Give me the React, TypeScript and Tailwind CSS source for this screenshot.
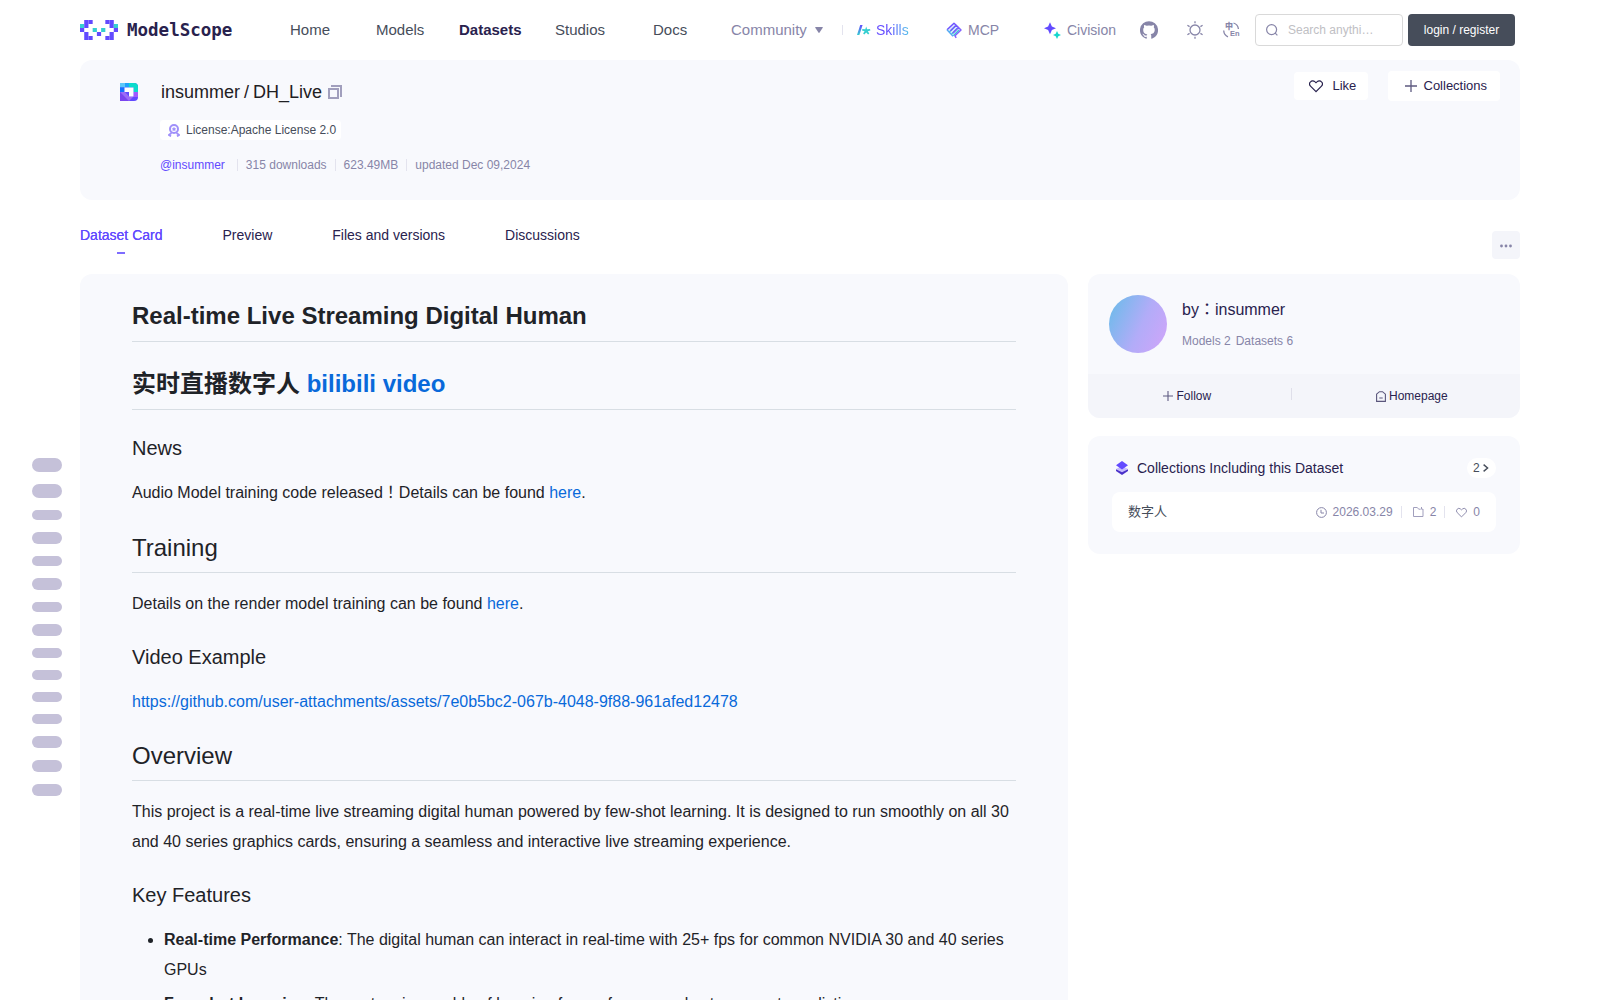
import clsx from "clsx";

const outline = [14, 14, 10, 12, 10, 12, 10, 12, 10, 10, 10, 10, 12, 12, 12];

const navItems = [
  { label: "Home", width: "w-[86px]" },
  { label: "Models", width: "w-[83px]" },
  { label: "Datasets", width: "w-24", active: true },
  { label: "Studios", width: "w-[98px]" },
  { label: "Docs", width: "w-[78px]" },
];

// [column, row, color]
const logoPixels: [number, number, string][] = [
  [1, 0, "#624aff"], [2, 0, "#624aff"], [6, 0, "#624aff"], [7, 0, "#624aff"],
  [0, 1, "#36cfd1"], [1, 1, "#624aff"], [7, 1, "#624aff"], [8, 1, "#36cfd1"],
  [0, 2, "#624aff"], [3, 2, "#36cfd1"], [5, 2, "#36cfd1"], [8, 2, "#624aff"],
  [1, 3, "#624aff"], [4, 3, "#624aff"], [7, 3, "#624aff"],
  [1, 4, "#624aff"], [2, 4, "#624aff"], [6, 4, "#624aff"], [7, 4, "#624aff"],
];

function Logo() {
  return (
    <a className="flex w-[210px] items-center">
      <svg width="38" height="20" viewBox="0 0 9 5" preserveAspectRatio="none">
        {logoPixels.map(([x, y, fill]) => (
          <rect key={`${x}-${y}`} x={x} y={y} width="1" height="1" fill={fill} />
        ))}
      </svg>
      <span className="ml-[9px] font-['DejaVu_Sans_Mono',monospace] text-[17.5px] leading-5 font-bold text-[#29224e]">
        ModelScope
      </span>
    </a>
  );
}

function HeartIcon({ size, className }: { size: number; className?: string }) {
  return (
    <svg width={size} height={size} viewBox="0 0 14 14" fill="none" stroke="currentColor" strokeWidth="1.2" className={className}>
      <path d="M7 12.600 1.500 7.1a3.1 3.1 0 0 1 0-4.3 3 3 0 0 1 4.300-.2L7 3.600l1.200-1a3 3 0 0 1 4.300.2 3.1 3.1 0 0 1 0 4.300Z" />
    </svg>
  );
}

function PlusIcon({ size }: { size: number }) {
  return (
    <svg width={size} height={size} viewBox="0 0 12 12" stroke="#5d5a80" strokeWidth="1.3">
      <path d="M6 0v12M0 6h12" />
    </svg>
  );
}

function Header() {
  return (
    <header className="flex h-[60px] items-center">
      <Logo />
      <nav className="flex text-[15px] text-[#464d5a]">
        {navItems.map((item) => (
          <a key={item.label} className={clsx(item.width, item.active && "font-bold text-[#29224e]")}>
            {item.label}
          </a>
        ))}
        <a className="flex w-[111px] items-center text-[#8785a8]">
          Community
          <svg className="ml-2" width="8" height="6" viewBox="0 0 8 6" fill="#8785a8">
            <path d="M.7 0h6.6q.9 0 .4.8L4.6 5.5q-.6.8-1.2 0L.3.8Q-.2 0 .7 0Z" />
          </svg>
        </a>
      </nav>
      <div className="flex items-center text-sm text-[#8785a8]">
        <span className="h-2.5 w-px bg-[#e3e3ee]" />
        <a className="flex w-[103px] items-center pl-3.5">
          <svg width="14" height="12" viewBox="0 0 14 12" fill="none">
            <defs>
              <linearGradient id="slash" x1="0" y1="0" x2="0" y2="1">
                <stop stopColor="#624aff" />
                <stop offset="1" stopColor="#36cfd1" />
              </linearGradient>
            </defs>
            <path d="M3.200 1h2.400L2.400 11H0Z" fill="url(#slash)" />
            <path
              d="m9.200 2.400.9 2.900 2.900-.3.400 1.400-2.600.9 1.500 2.300-1.200.9-1.900-2-1.900 2-1.200-.9 1.500-2.300L5 6.400 5.400 5l2.900.3Z"
              fill="#36cfd1"
            />
          </svg>
          <span className="ml-[5px] bg-linear-to-r from-[#624aff] from-40% to-[#56c3e8] bg-clip-text text-transparent">
            Skills
          </span>
        </a>
        <a className="flex w-[98px] items-center">
          <svg width="16" height="17" viewBox="0 0 16 17" fill="none" strokeLinejoin="round">
            <defs>
              <linearGradient id="mcp" x1="0" y1="0" x2="1" y2="1">
                <stop stopColor="#624aff" />
                <stop offset="1" stopColor="#8f6bff" />
              </linearGradient>
            </defs>
            <path d="M8 1.200 14.800 8 9 14H6.500L1.200 8Z" fill="#dfe6ff" />
            <path d="m3.400 10 6-6M5.600 12l6-6M7.400 13.800l5.600-5.800" stroke="#36cfd1" strokeWidth="1.300" />
            <path
              d="m1 7.800 7-6.600L10.200 3.200 4.500 8.700M10.200 3.200l2.300 2.300-5.600 5.600M12.500 5.500 15 8l-6 5.800 1.200 2"
              stroke="url(#mcp)"
              strokeWidth="1.500"
            />
            <path d="m1 7.800 6 6.400" stroke="#56a8f5" strokeWidth="1.300" />
          </svg>
          <span className="ml-[6px]">MCP</span>
        </a>
        <a className="flex w-24 items-center">
          <svg width="17" height="17" viewBox="0 0 17 17">
            <path d="M6 .2 7.900 4.400 12 6.200 7.900 8 6 12.200 4.100 8 0 6.200l4.100-1.800Z" fill="#624aff" />
            <path d="m13 9 1.300 2.700L17 13l-2.700 1.300L13 17l-1.300-2.700L9 13l2.700-1.300Z" fill="#16d6cd" />
          </svg>
          <span className="ml-1.5">Civision</span>
        </a>
        <svg className="mr-[29px]" width="18" height="18" viewBox="0 0 24 24" fill="#8785a8">
          <path d="M12 .3a12 12 0 0 0-3.8 23.4c.6.1.8-.3.8-.6v-2c-3.3.7-4-1.6-4-1.6-.6-1.4-1.4-1.8-1.4-1.8-1-.7.1-.7.1-.7 1.2 0 1.9 1.2 1.9 1.2 1 1.8 2.8 1.3 3.5 1 0-.8.4-1.3.7-1.6-2.7-.3-5.5-1.3-5.5-6 0-1.2.5-2.3 1.3-3.1-.2-.4-.6-1.6 0-3.2 0 0 1-.3 3.4 1.2a11.500 11.500 0 0 1 6 0c2.3-1.500 3.3-1.200 3.3-1.200.6 1.600.2 2.800 0 3.200.9.8 1.3 1.900 1.3 3.200 0 4.600-2.800 5.600-5.500 5.900.5.400.9 1 .9 2.200v3.300c0 .3.1.7.8.6A12 12 0 0 0 12 .3" />
        </svg>
        <svg className="mr-[19px]" width="17" height="18" viewBox="0 0 17 18" fill="none" stroke="#8785a8" strokeWidth="1.3">
          <circle cx="8" cy="9" r="5" />
          <path d="M8 .2v2M8 15.800v2M.4 4.300l2.200 1.300M15.600 4.300l-2.200 1.300M.4 13.700l2.200-1.300M15.600 13.700l-2.200-1.300" />
        </svg>
        <div className="relative h-4 w-4 text-[#8785a8]">
          <svg className="absolute inset-0" width="16" height="16" viewBox="0 0 16 16" fill="none" stroke="#8785a8" strokeWidth="1.300">
            <path d="M.7 8.500Q1 13.300 5 14.800M10.500 1Q15 2.300 15.400 7" />
          </svg>
          <span className="absolute top-0 left-[2px] font-['Noto_Sans_CJK_SC',sans-serif] text-[8px] leading-[8px] font-black">中</span>
          <span className="absolute top-[8px] left-[7px] text-[7.5px] leading-[8px] font-bold">En</span>
        </div>
      </div>
      <div className="ml-4 flex h-8 w-[148px] items-center rounded border border-[#d9d9d9]">
        <svg className="ml-[10px]" width="12" height="12" viewBox="0 0 12 12" fill="none" stroke="#8785a8" strokeWidth="1.2">
          <circle cx="5.6" cy="5.6" r="5" />
          <path d="m9.2 9.2 2.2 2.2" />
        </svg>
        <span className="ml-[10px] text-xs text-[#c0c0c4]">Search anythi…</span>
      </div>
      <button className="ml-[5px] h-8 w-[107px] rounded bg-[#464d5a] text-xs text-white">login / register</button>
    </header>
  );
}

function DatasetBanner() {
  return (
    <section className="flex h-[140px] rounded-xl bg-[#f8f9fd]">
      <svg className="mt-[23px] ml-10" width="18" height="18" viewBox="0 0 18 18">
        <defs>
          <clipPath id="tile">
            <path d="M0 0h14a4 4 0 0 1 4 4v10a4 4 0 0 1-4 4H0Z" />
          </clipPath>
        </defs>
        <g clipPath="url(#tile)">
          <path d="M0 0h18v18H0Z" fill="#624aff" />
          <path d="M0 0h5v4.5H0Z" fill="#5cc8fa" />
          <path d="M5 0h4.500v4.500H5Z" fill="#1fa3fb" />
          <path d="M9 0h9v9h-4.500V4.500H9Z" fill="#0bdccb" />
          <path d="M0 4.500h4.500V9H0Z" fill="#1472ff" />
          <path d="M13.500 9H18v5l-4.500 0Z" fill="#a05bff" />
          <path d="M0 9l9 9H0Z" fill="#7a45ef" />
          <path d="M0 9h5l4 4.500h4.500L9 18Z" fill="#9c6bf7" />
          <path d="M4.500 4.500h9v9H9V9H4.500Z" fill="#fff" />
        </g>
      </svg>
      <div className="ml-[22px] flex flex-1 flex-col items-start">
        <h1 className="mt-[19px] ml-px flex h-[26px] items-center text-lg text-[#1f2023]">
          insummer<span className="mx-1">/</span>DH_Live
          <svg className="ml-1.5" width="14" height="14" viewBox="0 0 14 14" fill="none" stroke="#a19fbd" strokeWidth="2">
            <path d="M1 4h9v9H1ZM3 1h10v11" />
          </svg>
        </h1>
        <div className="mt-[15px] flex h-5 w-[181px] items-center rounded bg-white text-xs text-[#464d5a]">
          <svg className="ml-2 mr-[6px]" width="12" height="13" viewBox="0 0 12 13" fill="none" stroke="#a090fa">
            <circle cx="6" cy="5" r="4" strokeWidth="2" />
            <path d="m6 2.800.8 1.400 1.500.3-1 1.100.1 1.500L6 6.600l-1.400.5.1-1.500-1-1.100 1.500-.3Z" fill="#a090fa" stroke="none" />
            <path d="M3.500 9 .8 11l2.200 1.300M8.500 9l2.700 2L9 12.300" strokeWidth="1.800" />
          </svg>
          License:Apache License 2.0
        </div>
        <div className="mt-4 flex h-[18px] items-center text-xs text-[#8785a8]">
          <span className="mr-3 text-[#624aff]">@insummer</span>
          <span className="h-3 w-px bg-[#e3e3ee]" />
          <span className="mx-2">315 downloads</span>
          <span className="h-3 w-px bg-[#e3e3ee]" />
          <span className="mx-2">623.49MB</span>
          <span className="h-3 w-px bg-[#e3e3ee]" />
          <span className="ml-2">updated Dec 09,2024</span>
        </div>
      </div>
      <div className="mr-5 flex h-[52px] items-center gap-5 text-[13px] text-[#29224e]">
        <button className="flex h-7 w-[74px] items-center rounded bg-white pl-[15px]">
          <HeartIcon size={14} className="mr-[9.5px]" />
          Like
        </button>
        <button className="flex h-[30px] w-28 items-center rounded bg-white pl-[17px]">
          <PlusIcon size={12} />
          <span className="ml-[6.5px]">Collections</span>
        </button>
      </div>
    </section>
  );
}

function Tabs() {
  return (
    <div className="flex h-[74px] justify-between text-sm text-[#29224e]">
      <div className="flex gap-[60px] pt-[25px]">
        <div className="flex flex-col items-center text-[#624aff] [text-shadow:0_0_0.25px_currentColor]">
          Dataset Card
          <span className="mt-[7px] h-0.5 w-2 bg-[#7e6cff]" />
        </div>
        <span>Preview</span>
        <span>Files and versions</span>
        <span>Discussions</span>
      </div>
      <button className="mt-[31px] flex h-7 w-7 items-center justify-center rounded bg-[#f4f5fa]">
        <svg width="12" height="4" viewBox="0 0 12 4" fill="#8785a8" className="mt-0.5">
          <circle cx="1.500" cy="2" r="1.400" />
          <circle cx="6" cy="2" r="1.400" />
          <circle cx="10.500" cy="2" r="1.400" />
        </svg>
      </button>
    </div>
  );
}

function Title({ children }: { children: React.ReactNode }) {
  return (
    <h1 className="mb-6 border-b border-[#d8dee4] pb-[7.2px] text-2xl leading-[35.8px] font-bold">{children}</h1>
  );
}

function Heading({ children }: { children: React.ReactNode }) {
  return <h2 className="mt-6 mb-4 border-b border-[#d8dee4] pb-[7.4px] text-2xl leading-[32.8px]">{children}</h2>;
}

function SubHeading({ children }: { children: React.ReactNode }) {
  return <h3 className="mt-6 mb-4 text-xl leading-7">{children}</h3>;
}

function Link({ children }: { children: React.ReactNode }) {
  return <a className="text-[#0969da]">{children}</a>;
}

// Traditional glyphs keep full-width punctuation centred
function Mark({ children }: { children: React.ReactNode }) {
  return <span className="font-['Noto_Sans_CJK_TC',sans-serif] leading-none">{children}</span>;
}

function Readme() {
  return (
    <article className="w-[988px] rounded-xl bg-[#f8f9fd] px-[52px] pt-[24.2px] text-base leading-[29.6px] text-[#1f2328]">
      <Title>Real-time Live Streaming Digital Human</Title>
      <Title>
        实时直播数字人 <Link>bilibili video</Link>
      </Title>
      <SubHeading>News</SubHeading>
      <p className="h-[29.6px]">
        Audio Model training code released<Mark>！</Mark>Details can be found <Link>here</Link>.
      </p>
      <Heading>Training</Heading>
      <p>
        Details on the render model training can be found <Link>here</Link>.
      </p>
      <SubHeading>Video Example</SubHeading>
      <p>
        <Link>https://github.com/user-attachments/assets/7e0b5bc2-067b-4048-9f88-961afed12478</Link>
      </p>
      <Heading>Overview</Heading>
      <p>
        This project is a real-time live streaming digital human powered by few-shot learning. It is designed to run
        smoothly on all 30 and 40 series graphics cards, ensuring a seamless and interactive live streaming experience.
      </p>
      <SubHeading>Key Features</SubHeading>
      <ul className="list-disc space-y-1 pl-8 leading-[30px]">
        <li>
          <strong>Real-time Performance</strong>: The digital human can interact in real-time with 25+ fps for common
          NVIDIA 30 and 40 series GPUs
        </li>
        <li>
          <strong>Few-shot Learning</strong>: The system is capable of learning from a few examples to generate realistic
        </li>
      </ul>
    </article>
  );
}

function AuthorCard() {
  return (
    <section className="h-36 overflow-hidden rounded-xl bg-[#f8f9fd] text-[#29224e]">
      <div className="flex h-[100px] pt-[21px] pl-[21px]">
        <div className="h-[58px] w-[58px] rounded-full bg-[linear-gradient(115deg,#76b9ec_12%,#b2acf8_55%,#cba6f9_90%)]" />
        <div className="ml-[15px]">
          <h2 className="mt-[3px] h-6 text-base leading-6">
            by<Mark>：</Mark>insummer
          </h2>
          <div className="mt-2.5 flex gap-[5px] text-xs leading-[18px] text-[#8785a8]">
            <span>Models 2</span>
            <span>Datasets 6</span>
          </div>
        </div>
      </div>
      <div className="flex h-11 items-center bg-[#f4f5fa] text-xs">
        <button className="flex w-[203px] items-center pl-[75px]">
          <PlusIcon size={10} />
          <span className="ml-[3.5px]">Follow</span>
        </button>
        <span className="mb-1 h-3 w-px bg-[#dfdfea]" />
        <button className="flex items-center pl-[84px]">
          <svg width="10" height="11" viewBox="0 0 10 11" fill="none" stroke="#5a567c" strokeWidth="1.100">
            <path d="M.6 3.200 3.500.7h3l2.900 2.500v7.200H.6ZM3.300 7h3.400" />
          </svg>
          <span className="ml-[3px]">Homepage</span>
        </button>
      </div>
    </section>
  );
}

function CollectionsCard() {
  return (
    <section className="mt-[18px] h-[118px] rounded-xl bg-[#f8f9fd] px-6 pt-[22px]">
      <div className="flex h-5 items-center text-sm text-[#29224e]">
        <svg className="ml-1" width="12" height="14" viewBox="0 0 12 14">
          <path d="M6 5 12 8 6 12 0 8Z" fill="#c6bcff" />
          <path d="M6 0 12 4.200 6 8.400 0 4.200Z" fill="#624aff" />
          <path d="M0 8.200 6 11.200 12 8.200V10L6 14 0 10Z" fill="#4a30c9" />
        </svg>
        <h2 className="ml-[9px] flex-1">Collections Including this Dataset</h2>
        <div className="flex h-5 w-[29px] items-center rounded-full bg-white pl-1.5 text-xs text-[#464d5a]">
          2
          <svg className="ml-[3px]" width="6" height="8" viewBox="0 0 6 8" fill="none" stroke="#464d5a" strokeWidth="1.400">
            <path d="m.6.6 4 3.400-4 3.400" />
          </svg>
        </div>
      </div>
      <div className="mt-3.5 flex h-10 items-center rounded-lg bg-white px-4 text-xs text-[#8785a8]">
        <span className="flex-1 text-[13px] text-[#464d5a]">数字人</span>
        <svg width="11" height="11" viewBox="0 0 11 11" fill="none" stroke="currentColor">
          <circle cx="5.500" cy="5.500" r="4.900" />
          <path d="M5 2.800V6h3" />
        </svg>
        <span className="ml-1.5">2026.03.29</span>
        <span className="mr-[9px] ml-2 h-3 w-px bg-[#e3e3ee]" />
        <svg className="ml-0.5" width="11" height="10" viewBox="0 0 11 10" fill="none" stroke="#a19fbd">
          <path d="M.5.5h3.800l1.400 1.700h2M10 2v7.500H.5V.5M8.500 0v2.200H10" />
        </svg>
        <span className="ml-1.5">2</span>
        <span className="mr-[7px] ml-2 h-3 w-px bg-[#e3e3ee]" />
        <HeartIcon size={11} className="ml-1" />
        <span className="ml-[6px]">0</span>
      </div>
    </section>
  );
}

export default function App() {
  return (
    <div className="flex h-screen overflow-hidden bg-white font-['Liberation_Sans','Noto_Sans_CJK_SC',sans-serif]">
      <aside className="flex w-20 flex-col gap-3 pt-[458px] pl-8">
        {outline.map((height, i) => (
          <span key={i} className="w-[30px] shrink-0 rounded-full bg-[#c5c1d9]" style={{ height }} />
        ))}
      </aside>
      <main className="w-[1440px]">
        <Header />
        <DatasetBanner />
        <Tabs />
        <div className="flex items-start gap-5">
          <Readme />
          <div className="w-[432px]">
            <AuthorCard />
            <CollectionsCard />
          </div>
        </div>
      </main>
    </div>
  );
}
